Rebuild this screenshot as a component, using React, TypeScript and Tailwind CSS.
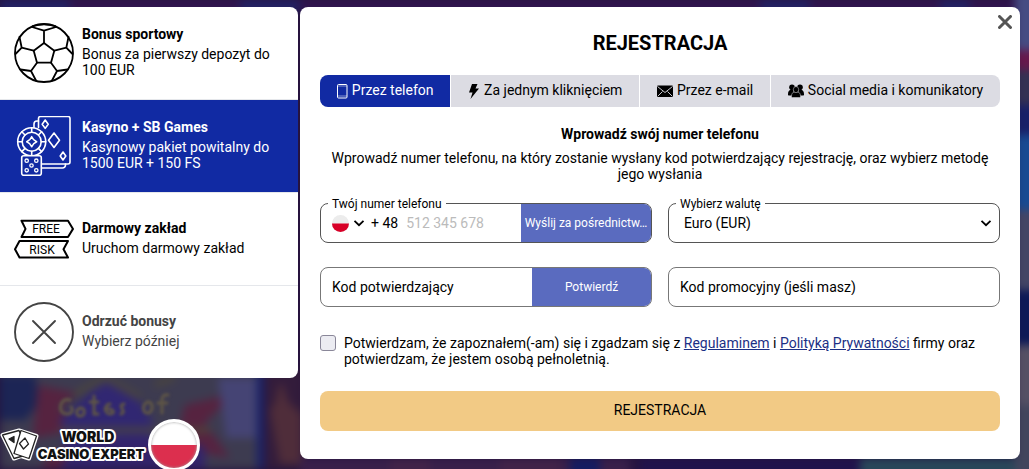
import { useState } from "react";

const BallIcon = () => (
    <svg viewBox="0 0 60 60" className="size-[60px] shrink-0" fill="none" stroke="currentColor" strokeWidth="1.8" strokeLinejoin="round" strokeLinecap="round">
        <circle cx="30" cy="30" r="29" />
        <path d="M30 20 40.3 27.7 37 39.7H23L19.7 27.7Z" />
        <path d="M30 20V7.7M18 4 30 7.7 42 4M19 3C26 1 34 1 41 3" />
        <path d="M19.7 27.7 7.7 24.7M5.5 14 7.7 24.7 1.5 31M40.3 27.7 52.3 24.7M54.5 14 52.3 24.7 58.5 31" />
        <path d="M23 39.7 17 48M6.5 46.5 17 48M17 48 22 57.5M37 39.7 43 48M53.5 46.5 43 48 38 57.5" />
    </svg>
);

const CasinoIcon = () => (
    <svg viewBox="0 0 60 60" className="size-[60px] shrink-0" fill="none" stroke="currentColor" strokeWidth="1.6" strokeLinejoin="round" strokeLinecap="round">
        <path d="M24.5 11.5V2.5a2 2 0 0 1 2-2H54a2 2 0 0 1 2 2V46a2 2 0 0 1-2 2H28" />
        <path d="M24.5 5H23a3 3 0 0 0-3 3v3.5M28 52h20.500a3 3 0 0 0 3-3v-1" />
        <path d="m31.200 4 3 4.200-3 4.200-3-4.200ZM40 17l5.500 7.200L40 31.500l-5.500-7.300ZM49 36l2.800 4-2.800 4-2.800-4Z" />
        <circle cx="17.700" cy="25.700" r="14" />
        <circle cx="17.700" cy="25.700" r="9.500" />
        <path d="M17.700 20.700c1 2.500 2.500 4 5 5-2.500 1-4 2.500-5 5-1-2.500-2.500-4-5-5 2.500-1 4-2.500 5-5Z" />
        <path d="M17.700 11.700v4.500M17.700 35.200v4.500M3.700 25.700h4.500M27.200 25.700h4.500M7.800 15.800 11 19M24.400 19l3.200-3.200M7.800 35.600 11 32.400M24.400 32.400l3.200 3.200" />
        <rect x="7.700" y="39.700" width="19.600" height="19.600" rx="2" fill="#112aa3" />
        <g strokeWidth="1.300">
            <circle cx="12.700" cy="44.700" r="1.700" />
            <circle cx="22.300" cy="44.700" r="1.700" />
            <circle cx="17.500" cy="49.500" r="1.700" />
            <circle cx="12.700" cy="54.300" r="1.700" />
            <circle cx="22.300" cy="54.300" r="1.700" />
        </g>
    </svg>
);

const FreeRiskIcon = () => (
    <svg viewBox="0 0 60 60" className="size-[60px] shrink-0" fill="none" stroke="currentColor" strokeWidth="2" strokeLinejoin="round">
        <path d="M7.500 11.700H54l5 8.200-5 8.100H7.500l4-8.100ZM5.500 32H54l-4.500 8.200 4.500 8.300H5.500L1 40.200Z" />
        <g fill="currentColor" stroke="none" textAnchor="middle" fontSize="12" fontWeight="400">
            <text x="32" y="24">FREE</text>
            <text x="28" y="44.500">RISK</text>
        </g>
    </svg>
);

const RejectIcon = () => (
    <svg viewBox="0 0 60 60" className="size-[60px] shrink-0" fill="none" stroke="currentColor" strokeWidth="1.900" strokeLinecap="round">
        <circle cx="30" cy="30" r="29" />
        <path d="M19 19 41 41M41 19 19 41" />
    </svg>
);

const PhoneIcon = () => (
    <svg viewBox="0 0 11 16" className="h-4 w-[11px]" fill="none" stroke="currentColor">
        <rect x="0.500" y="1.500" width="9.500" height="13.500" rx="1" />
        <path d="M0.500 3h9.500M0.500 13h9.500" strokeOpacity=".5" />
    </svg>
);

const BoltIcon = () => (
    <svg viewBox="0 0 12 16" className="h-4 w-3" fill="currentColor">
        <path d="M4 1h5.500L7.500 5.500H11L2.500 16l2-6.500H1Z" />
    </svg>
);

const MailIcon = () => (
    <svg viewBox="0 0 16 16" className="size-4">
        <rect y="2.500" width="16" height="11.500" rx="1" fill="currentColor" />
        <path d="m.5 3.500 7.500 6 7.500-6M.8 13.200l4.700-4.700M15.200 13.200l-4.700-4.700" fill="none" stroke="#dcdce3" strokeWidth=".9" />
    </svg>
);

const PeopleIcon = () => (
    <svg viewBox="0 0 16 16" className="size-4" fill="currentColor">
        <circle cx="4" cy="4.200" r="2.800" />
        <circle cx="12" cy="4.200" r="2.800" />
        <path d="M0 11c0-3 1.500-4.500 4-4.500S6 8 5 12.500H1c-.7 0-1-.3-1-1ZM16 11c0-3-1.500-4.500-4-4.500S10 8 11 12.500h4c.7 0 1-.3 1-1Z" />
        <g stroke="#dcdce3" strokeWidth=".5">
            <path d="M3.500 13.200c0-3.200 1.500-4.500 4.500-4.500s4.500 1.300 4.500 4.500c0 1-.5 1.300-1.300 1.300H4.800c-.8 0-1.300-.3-1.300-1.300Z" />
            <ellipse cx="8" cy="6.600" rx="2.700" ry="3.100" />
        </g>
    </svg>
);

const Chevron = ({ className }: { className?: string }) => (
    <svg viewBox="0 0 12 12" className={className} fill="none" stroke="currentColor" strokeWidth="1.800">
        <path d="m1.500 3.800 4.500 4.400 4.500-4.400" />
    </svg>
);

const Flag = ({ className }: { className?: string }) => (
    <svg viewBox="0 0 20 20" className={className}>
        <circle cx="10" cy="10" r="10" fill="#ececec" />
        <path d="M0 10a10 10 0 0 0 20 0Z" fill="#d80027" />
    </svg>
);

// blurred slot thumbnails behind the dialog
const Backdrop = () => (
    <svg className="absolute inset-0 h-full w-full" viewBox="0 0 1029 469" preserveAspectRatio="none" aria-hidden="true">
        <rect width="1029" height="469" fill="#26143f" />
        <g style={{ filter: "blur(4px)" }}>
            <rect width="1029" height="12" fill="#31144f" />
            <path d="M0 0h70v12H0ZM240 0h60v12h-60ZM760 0h50v12h-50ZM940 0h30v12h-30Z" fill="#222266" />
            <rect x="0" y="370" width="258" height="99" fill="#3d3b50" />
            <path d="M0 375h35l5 27-15 18H0Z" fill="#1c2555" />
            <path d="m38 385 40 8-20 15 35 20-60 10ZM185 405l50-12-30 30 25 35-55-10ZM50 455l40-20 20 34H40Z" fill="#562340" />
            <path d="M60 420 90 392l20-12 25 14 20 32-15 43H70Z" fill="#312772" />
            <path d="M60 469c10-30 80-40 145-22v22Z" fill="#33246b" />
            <path d="M75 395 105 378l35 20M60 430h150M155 385l20-8" stroke="#4d4839" strokeWidth="5" fill="none" />
            <path d="M218 378h38v60h-30Z" fill="#454474" />
            <rect x="257" y="370" width="7" height="99" fill="#17206a" />
            <rect x="264" y="370" width="40" height="99" fill="#331c3b" />
            <path d="M270 410c10-10 4-18 12-28l6 20 14 12v50h-22Z" fill="#4f2d3a" />
            <rect x="298" y="10" width="3" height="360" fill="#28143c" />
            <rect x="300" y="458" width="330" height="20" fill="#39204a" />
            <path d="M390 458h40v20h-40ZM500 458h60v20h-60Z" fill="#422349" />
            <path d="M570 458h30v20h-30Z" fill="#151d61" />
            <rect x="640" y="458" width="220" height="20" fill="#21134c" />
            <rect x="860" y="458" width="169" height="20" fill="#29475a" />
            <rect x="1015" y="-10" width="25" height="60" fill="#454c83" />
            <rect x="1015" y="50" width="25" height="20" fill="#66184c" />
            <rect x="1015" y="70" width="25" height="35" fill="#343153" />
            <rect x="1015" y="105" width="25" height="30" fill="#172068" />
            <rect x="1015" y="135" width="25" height="75" fill="#174a92" />
            <rect x="1015" y="210" width="25" height="80" fill="#434565" />
            <rect x="1015" y="290" width="25" height="55" fill="#0d1957" />
            <rect x="1015" y="345" width="25" height="60" fill="#555064" />
            <rect x="1015" y="405" width="25" height="74" fill="#42455d" />
        </g>
        <g style={{ filter: "blur(1.5px)" }} fill="none" stroke="#5f5646" strokeWidth="3" strokeLinecap="round">
            <path d="M70 400c-10-4-14 14-3 14 6 0 6-5 4-7M80 408c-5 2-4 9 1 8s4-9-1-8M94 396v18h4M90 402h8M110 404c-6 0-6 10 0 10s4-6-5-5M124 404c-8 2 4 7-3 10M148 402c-6 1-6 12 0 11s5-12 0-11M162 413v-14c0-3 3-5 6-4M158 403h9" />
        </g>
    </svg>
);

const bonuses = [
    { title: "Bonus sportowy", text: "Bonus za pierwszy depozyt do 100 EUR", Icon: BallIcon },
    { title: "Kasyno + SB Games", text: "Kasynowy pakiet powitalny do 1500 EUR + 150 FS", Icon: CasinoIcon },
    { title: "Darmowy zakład", text: "Uruchom darmowy zakład", Icon: FreeRiskIcon },
    { title: "Odrzuć bonusy", text: "Wybierz później", Icon: RejectIcon, muted: true },
];

const tabs = [
    { label: "Przez telefon", Icon: PhoneIcon },
    { label: "Za jednym kliknięciem", Icon: BoltIcon },
    { label: "Przez e-mail", Icon: MailIcon },
    { label: "Social media i komunikatory", Icon: PeopleIcon },
];

const BonusList = () => {
    const [selected, setSelected] = useState(1);

    return (
        <div className="w-[298px] shrink-0 divide-y divide-gray-200 overflow-hidden rounded-r-lg bg-white">
            {bonuses.map(({ title, text, Icon, muted }, i) => (
                <button
                    key={title}
                    type="button"
                    onClick={() => setSelected(i)}
                    className={`flex w-full items-center gap-2 py-4 pr-5 pl-3.5 text-left ${i === selected ? "bg-[#112aa3] text-white" : muted ? "text-[#444]" : "text-black"}`}
                >
                    <Icon />
                    <span className="pb-0.5">
                        <span className="mb-1 block font-bold">{title}</span>
                        <span className="block">{text}</span>
                    </span>
                </button>
            ))}
        </div>
    );
};

const SiteLogo = () => (
    <div className="absolute bottom-0 left-0 flex items-end">
        <svg viewBox="0 0 148 46" className="h-[46px] w-[148px]">
            <path d="M2.500 12 19 7.500 36.500 13 29 35.500 21 33 14 35.500Z" stroke="#fff" strokeWidth="4" strokeLinejoin="round" fill="#fff" />
            <g stroke="#222" strokeWidth="1.300" strokeLinejoin="round" fill="#fff">
                <path d="M2.500 12 19 7.500 30 31 14 35.500Z" />
                <path d="M21 7.500 36.500 13 29 35.500 14 30.500Z" />
                <path d="m25 15 3.500 6-5 5-4-5.500Z" />
                <path d="m9 16 5-2.500v6Z" fill="#222" />
            </g>
            <g className="font-black" textAnchor="middle" fontFamily="Inter, sans-serif" fill="#111" stroke="#fff" strokeWidth="4" strokeLinejoin="round" paintOrder="stroke">
                <text x="88" y="19" fontSize="14">WORLD</text>
                <text x="91" y="36" fontSize="13">CASINO EXPERT</text>
            </g>
        </svg>
        <div className="-mb-0.5 size-[52px] overflow-hidden rounded-full border-3 border-white bg-linear-to-b from-white from-50% to-[#dc2f4e] to-50% shadow-[inset_0_0_3px_#999]" />
    </div>
);

const App: React.FC = () => {
    const [tab, setTab] = useState(0);

    return (
        <div className="relative min-h-screen overflow-hidden font-[Roboto,sans-serif] text-sm leading-4 text-black">
            <Backdrop />
            <SiteLogo />
            <main className="relative flex items-start gap-0.5 pt-[7px] pr-[9px]">
                <BonusList />

                <section className="relative min-w-0 flex-1 rounded-lg bg-white px-5 pt-6 pb-7">
                    <button type="button" aria-label="Zamknij" className="absolute top-2 right-2">
                        <svg viewBox="0 0 14 14" className="size-3.5" stroke="#555" strokeWidth="3" strokeLinecap="round">
                            <path d="m1.500 1.500 11 11M12.500 1.500l-11 11" />
                        </svg>
                    </button>
                    <h1 className="text-center text-xl leading-6 font-bold">REJESTRACJA</h1>

                    {/* registration methods */}
                    <div className="mt-5 flex gap-px overflow-hidden rounded-lg">
                        {tabs.map(({ label, Icon }, i) => (
                            <button
                                key={label}
                                type="button"
                                onClick={() => setTab(i)}
                                className={`flex h-8 flex-auto items-center justify-center gap-1 whitespace-nowrap ${i === tab ? "bg-[#112aa3] text-white" : "bg-[#dcdce3]"}`}
                            >
                                <Icon />
                                <span className="pb-0.5">{label}</span>
                            </button>
                        ))}
                    </div>

                    <h2 className="mt-[19px] text-center font-bold">Wprowadź swój numer telefonu</h2>
                    <p className="mt-2 text-center">
                        Wprowadź numer telefonu, na który zostanie wysłany kod potwierdzający rejestrację, oraz wybierz metodę jego wysłania
                    </p>

                    <form className="mt-[21px]" onSubmit={(e) => e.preventDefault()}>
                        <div className="grid grid-cols-2 gap-x-4 gap-y-6">
                            <div className="relative flex h-10 rounded-lg border border-[#555]">
                                <label htmlFor="phone" className="absolute -top-2 left-[7px] bg-white px-1 text-xs leading-4">Twój numer telefonu</label>
                                <button type="button" aria-label="Kraj" className="flex items-center gap-1 pl-[11px]">
                                    <Flag className="size-[17px]" />
                                    <Chevron className="size-3" />
                                </button>
                                <span className="self-center pl-1.5">+ 48</span>
                                <input id="phone" type="tel" placeholder="512 345 678" className="min-w-0 flex-1 pl-2 outline-none placeholder:text-[#bbb]" />
                                <button type="button" className="w-[130px] rounded-r-[7px] bg-[#5a6bbf] text-xs text-white">Wyślij za pośrednictw…</button>
                            </div>
                            <div className="relative h-10 rounded-lg border border-[#555]">
                                <label htmlFor="currency" className="absolute -top-2 left-[7px] bg-white px-1 text-xs leading-4">Wybierz walutę</label>
                                <select id="currency" className="h-full w-full appearance-none pr-8 pl-[15px] outline-none">
                                    <option>Euro (EUR)</option>
                                </select>
                                <Chevron className="pointer-events-none absolute top-[13px] right-[7px] size-3" />
                            </div>
                            <div className="flex h-10 rounded-lg border border-[#777]">
                                <input type="text" aria-label="Kod potwierdzający" placeholder="Kod potwierdzający" className="min-w-0 flex-1 pl-[11px] outline-none placeholder:text-black" />
                                <button type="button" className="w-[119px] rounded-r-[7px] bg-[#5a6bbf] text-xs text-white">Potwierdź</button>
                            </div>
                            <input type="text" aria-label="Kod promocyjny" placeholder="Kod promocyjny (jeśli masz)" className="h-10 rounded-lg border border-[#777] px-[11px] outline-none placeholder:text-black" />
                        </div>

                        <div className="mt-7 flex items-start gap-2">
                            <input id="terms" type="checkbox" className="size-4 shrink-0 appearance-none rounded-[3px] border border-[#8a8799] bg-[#ececf2] checked:bg-[#112aa3]" />
                            <label htmlFor="terms">
                                Potwierdzam, że zapoznałem(-am) się i zgadzam się z <a href="#regulamin" className="text-[#1b2f85] underline">Regulaminem</a> i <a href="#prywatnosc" className="text-[#1b2f85] underline">Polityką Prywatności</a> firmy oraz potwierdzam, że jestem osobą pełnoletnią.
                            </label>
                        </div>

                        <button type="submit" className="mt-6 h-10 w-full rounded-lg bg-[#f2ca85] pb-0.5">REJESTRACJA</button>
                    </form>
                </section>
            </main>
        </div>
    );
};

export default App;
